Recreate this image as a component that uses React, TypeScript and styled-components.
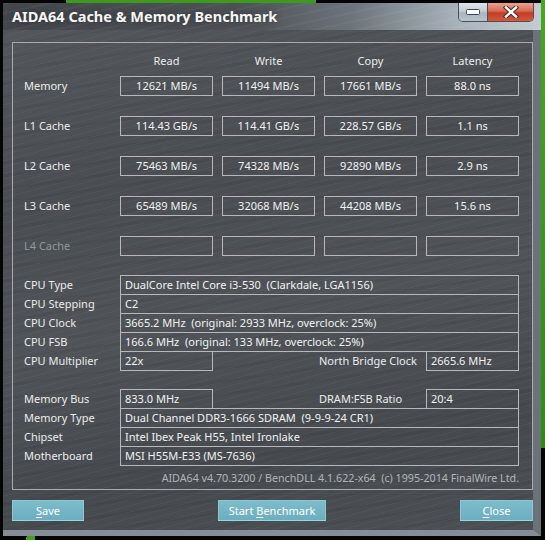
import styled, { createGlobalStyle } from 'styled-components'

const GlobalStyle = createGlobalStyle`
  html, body {
    margin: 0;
    padding: 0;
    background: #000;
  }
  body {
    font-family: "Noto Sans", "Open Sans", sans-serif;
  }
`

type BenchRow = { label: string; values: string[]; disabled?: boolean }

const benchRows: BenchRow[] = [
  { label: 'Memory', values: ['12621 MB/s', '11494 MB/s', '17661 MB/s', '88.0 ns'] },
  { label: 'L1 Cache', values: ['114.43 GB/s', '114.41 GB/s', '228.57 GB/s', '1.1 ns'] },
  { label: 'L2 Cache', values: ['75463 MB/s', '74328 MB/s', '92890 MB/s', '2.9 ns'] },
  { label: 'L3 Cache', values: ['65489 MB/s', '32068 MB/s', '44208 MB/s', '15.6 ns'] },
  { label: 'L4 Cache', values: ['', '', '', ''], disabled: true },
]

const headers = ['Read', 'Write', 'Copy', 'Latency']

export default function App() {
  return (
    <>
      <GlobalStyle />
      <Desktop>
        <Window>
          <TitleBar>
            <Title>AIDA64 Cache &amp; Memory Benchmark</Title>
            <Controls>
              <MinButton>
                <svg width="14" height="6" viewBox="0 0 14 6">
                  <rect x="0.5" y="0.5" width="13" height="5" rx="1" fill="#fff" stroke="#3c4650" />
                </svg>
              </MinButton>
              <CloseButton>
                <svg width="16" height="12" viewBox="0 0 16 12">
                  <path d="M3 1.5 L13 10.5 M13 1.5 L3 10.5" stroke="#4a2a24" strokeWidth="4.4" strokeLinecap="square" />
                  <path d="M3 1.5 L13 10.5 M13 1.5 L3 10.5" stroke="#fff" strokeWidth="2.4" strokeLinecap="square" />
                </svg>
              </CloseButton>
            </Controls>
          </TitleBar>

          <Client>
            <GroupBox>
              <BenchHeader>
                <span />
                {headers.map(h => (
                  <HeaderCell key={h}>{h}</HeaderCell>
                ))}
              </BenchHeader>
              <BenchGrid>
                {benchRows.map(row => (
                  <BenchLine key={row.label}>
                    <RowLabel $disabled={row.disabled}>{row.label}</RowLabel>
                    {row.values.map((v, i) => (
                      <ValueBox key={i}>{v}</ValueBox>
                    ))}
                  </BenchLine>
                ))}
              </BenchGrid>

              <InfoBlock>
                <InfoRow>
                  <InfoLabel>CPU Type</InfoLabel>
                  <InfoValue $wide>DualCore Intel Core i3-530&nbsp; (Clarkdale, LGA1156)</InfoValue>
                </InfoRow>
                <InfoRow>
                  <InfoLabel>CPU Stepping</InfoLabel>
                  <InfoValue $wide>C2</InfoValue>
                </InfoRow>
                <InfoRow>
                  <InfoLabel>CPU Clock</InfoLabel>
                  <InfoValue $wide>3665.2 MHz&nbsp; (original: 2933 MHz, overclock: 25%)</InfoValue>
                </InfoRow>
                <InfoRow>
                  <InfoLabel>CPU FSB</InfoLabel>
                  <InfoValue $wide>166.6 MHz&nbsp; (original: 133 MHz, overclock: 25%)</InfoValue>
                </InfoRow>
                <InfoRow>
                  <InfoLabel>CPU Multiplier</InfoLabel>
                  <InfoValue>22x</InfoValue>
                  <MidLabel>North Bridge Clock</MidLabel>
                  <InfoValue>2665.6 MHz</InfoValue>
                </InfoRow>
              </InfoBlock>

              <InfoBlock $gap={18}>
                <InfoRow>
                  <InfoLabel>Memory Bus</InfoLabel>
                  <InfoValue>833.0 MHz</InfoValue>
                  <MidLabel>DRAM:FSB Ratio</MidLabel>
                  <InfoValue>20:4</InfoValue>
                </InfoRow>
                <InfoRow>
                  <InfoLabel>Memory Type</InfoLabel>
                  <InfoValue $wide>Dual Channel DDR3-1666 SDRAM&nbsp; (9-9-9-24 CR1)</InfoValue>
                </InfoRow>
                <InfoRow>
                  <InfoLabel>Chipset</InfoLabel>
                  <InfoValue $wide>Intel Ibex Peak H55, Intel Ironlake</InfoValue>
                </InfoRow>
                <InfoRow>
                  <InfoLabel>Motherboard</InfoLabel>
                  <InfoValue $wide>MSI H55M-E33 (MS-7636)</InfoValue>
                </InfoRow>
              </InfoBlock>

              <Footer>AIDA64 v4.70.3200 / BenchDLL 4.1.622-x64&nbsp; (c) 1995-2014 FinalWire Ltd.</Footer>
            </GroupBox>

            <ButtonRow>
              <ActionButton $width={72}><u>S</u>ave</ActionButton>
              <ActionButton $width={108}>Start <u>B</u>enchmark</ActionButton>
              <ActionButton $width={73}><u>C</u>lose</ActionButton>
            </ButtonRow>
          </Client>
        </Window>
      </Desktop>
    </>
  )
}

// Styled Components
const Desktop = styled.div`
  width: 545px;
  height: 540px;
  overflow: hidden;
  padding-top: 3px;
  box-sizing: border-box;
  background:
    linear-gradient(#3c9a1c, #3c9a1c) 66px 0 / 250px 3px no-repeat,
    linear-gradient(#45a81e, #2f8a14) 541px 0 / 4px 448px no-repeat,
    linear-gradient(100deg, transparent 30%, #43a21a 30% 60%, transparent 60%) 18px 536px / 28px 4px no-repeat,
    #050505;
`

const Window = styled.div`
  margin-left: 3px;
  width: 538px;
  display: flex;
  flex-direction: column;
`

const TitleBar = styled.div`
  height: 27px;
  display: flex;
  align-items: flex-start;
  background:
    repeating-linear-gradient(168deg, rgba(255, 255, 255, 0.035) 0 2px, transparent 2px 9px),
    linear-gradient(90deg, #43464b 0%, #4e5257 45%, #6d747b 65%, #aab4bc 85%, #c4ccd2 100%);
`

const Title = styled.div`
  padding: 3px 0 0 9px;
  color: #f6f6f6;
  font-size: 14.5px;
  font-weight: 700;
  line-height: 20px;
  text-shadow: 0 0 6px rgba(0, 0, 0, 0.45);
`

const Controls = styled.div`
  margin-left: auto;
  margin-right: 7px;
  display: flex;
  border: 1px solid #4a5058;
  border-top: none;
  border-radius: 0 0 5px 5px;
  overflow: hidden;
  height: 18px;
`

const MinButton = styled.div`
  width: 28px;
  display: flex;
  align-items: center;
  justify-content: center;
  border-right: 1px solid #4a5058;
  background: linear-gradient(#dfe5ea 0%, #c3ccd4 45%, #a9b5bf 55%, #b9c4cc 100%);
`

const CloseButton = styled.div`
  width: 45px;
  display: flex;
  align-items: center;
  justify-content: center;
  background: linear-gradient(#e9a392 0%, #d76a52 45%, #c33d24 55%, #d4583c 100%);
`

const Client = styled.div`
  padding: 12px 0 9px 9px;
  border-bottom: 6px solid #858d97;
  border-right: 8px solid #6c727a;
  color: #ececec;
  font-size: 11px;
  background:
    repeating-linear-gradient(165deg, rgba(255, 255, 255, 0.03) 0 1px, transparent 1px 6px),
    repeating-linear-gradient(172deg, rgba(0, 0, 0, 0.05) 0 3px, transparent 3px 13px),
    linear-gradient(170deg, #53575c 0%, #4a4d52 30%, #505459 55%, #464a4f 80%, #4c5055 100%);
`

const GroupBox = styled.div`
  border: 1px solid #a9abae;
  padding: 8px 13px 4px 11px;
`

const BenchHeader = styled.div`
  display: grid;
  grid-template-columns: 87px repeat(4, 93px);
  column-gap: 9px;
  height: 20px;
  margin-bottom: 5px;
`

const HeaderCell = styled.div`
  text-align: center;
  line-height: 20px;
`

const BenchGrid = styled.div`
  display: flex;
  flex-direction: column;
  gap: 20px;
`

const BenchLine = styled.div`
  display: grid;
  grid-template-columns: 87px repeat(4, 93px);
  column-gap: 9px;
  height: 20px;
`

const RowLabel = styled.div<{ $disabled?: boolean }>`
  line-height: 20px;
  color: ${p => (p.$disabled ? '#8c9a9a' : '#ececec')};
`

const ValueBox = styled.div`
  box-sizing: border-box;
  height: 20px;
  border: 1px solid #b6b8ba;
  text-align: center;
  line-height: 18px;
  color: #f2f2f2;
`

const InfoBlock = styled.div<{ $gap?: number }>`
  margin-top: ${p => p.$gap ?? 19}px;
  display: flex;
  flex-direction: column;
`

const InfoRow = styled.div`
  display: grid;
  grid-template-columns: 96px 93px 106px 107px 93px;
  height: 20px;

  & + & {
    margin-top: -1px;
  }
`

const InfoLabel = styled.div`
  line-height: 20px;
`

const InfoValue = styled.div<{ $wide?: boolean }>`
  box-sizing: border-box;
  height: 20px;
  border: 1px solid #b6b8ba;
  padding-left: 4px;
  line-height: 18px;
  white-space: nowrap;
  color: #f2f2f2;
  ${p => (p.$wide ? 'grid-column: 2 / 6;' : '')}
`

const MidLabel = styled.div`
  grid-column: 4;
  line-height: 20px;
  white-space: nowrap;
`

const Footer = styled.div`
  margin-top: 5px;
  height: 14px;
  line-height: 14px;
  text-align: right;
  font-size: 10.7px;
  color: #b3b5b8;
`

const ButtonRow = styled.div`
  margin-top: 10px;
  display: flex;
  justify-content: space-between;
`

const ActionButton = styled.button<{ $width: number }>`
  width: ${p => p.$width}px;
  height: 21px;
  padding: 0;
  border: 1px solid #8cc6d3;
  border-bottom-color: #9ad6e2;
  background: linear-gradient(#7dbccb, #6cadbf);
  color: #fff;
  font-family: "Noto Sans", "Open Sans", sans-serif;
  font-size: 11px;
  line-height: 19px;

  u {
    text-underline-offset: 2px;
  }
`
